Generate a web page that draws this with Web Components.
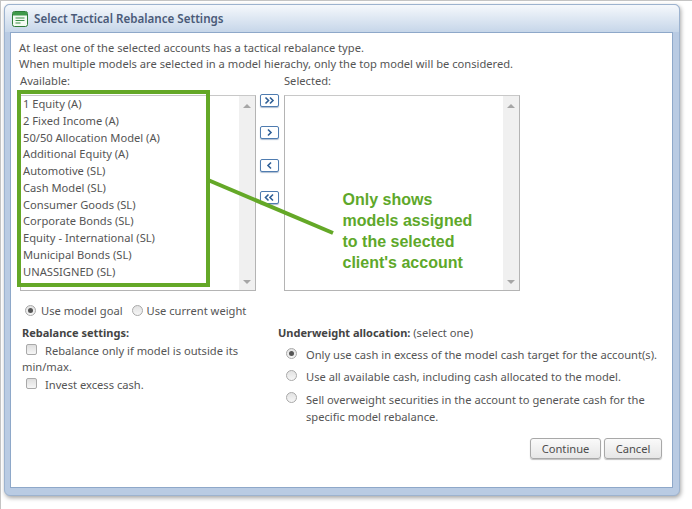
<!DOCTYPE html>
<html>
<head>
<meta charset="utf-8">
<style>
  html, body { margin: 0; padding: 0; background: #fff; }
  body { font-family: "Noto Sans", "Open Sans", sans-serif; font-size: 11.17px; color: #555; width: 692px; height: 509px; overflow: hidden; }
</style>
</head>
<body>
<rebalance-page>
  <rebalance-dialog heading="Select Tactical Rebalance Settings">
    <intro-text>
      At least one of the selected accounts has a tactical rebalance type.<br>
      When multiple models are selected in a model hierachy, only the top model will be considered.
    </intro-text>
    <model-picker>
      <span slot="available">1 Equity (A)</span>
      <span slot="available">2 Fixed Income (A)</span>
      <span slot="available">50/50 Allocation Model (A)</span>
      <span slot="available">Additional Equity (A)</span>
      <span slot="available">Automotive (SL)</span>
      <span slot="available">Cash Model (SL)</span>
      <span slot="available">Consumer Goods (SL)</span>
      <span slot="available">Corporate Bonds (SL)</span>
      <span slot="available">Equity - International (SL)</span>
      <span slot="available">Municipal Bonds (SL)</span>
      <span slot="available">UNASSIGNED (SL)</span>
    </model-picker>
    <goal-row></goal-row>
    <settings-columns></settings-columns>
    <dialog-actions></dialog-actions>
  </rebalance-dialog>
  <model-callout></model-callout>
</rebalance-page>

<script>
class RebalancePage extends HTMLElement {
  constructor() {
    super();
    this.attachShadow({ mode: 'open' }).innerHTML = `
      <style>
        :host { display: block; position: relative; width: 692px; height: 509px; box-sizing: border-box; border-top: 1px solid #c4c4c4; border-left: 1px solid #c4c4c4; padding: 3px 12px 0 3px; }
      </style>
      <slot></slot>`;
  }
}

class RebalanceDialog extends HTMLElement {
  constructor() {
    super();
    this.attachShadow({ mode: 'open' }).innerHTML = `
      <style>
        :host { display: block; height: 492px; box-sizing: border-box; border: 1px solid #9db3cf; border-radius: 5px 5px 6px 6px; background: #b9cbe3; box-shadow: 1px 2px 4px rgba(0,0,0,.35); padding: 0 6px 7px 5px; }
        .title { height: 27px; margin: 0 -6px 0 -5px; padding: 0 7px; display: flex; align-items: center; gap: 6px; background: linear-gradient(#f5f8fc, #c6d6e9); border-radius: 5px 5px 0 0; font-size: 11.6px; font-weight: 600; color: #4a5a78; }
        .body { height: 456px; box-sizing: border-box; background: #fff; border: 1px solid #8ea8c9; padding: 7px 0 0 8px; position: relative; }
        svg { display: block; flex: none; }
      </style>
      <div class="title">
        <svg width="16" height="16" viewBox="0 0 16 16">
          <rect x=".5" y=".5" width="15" height="15" rx="2" fill="#f4fbf2" stroke="#2f7d3a"/>
          <rect x="1" y="1" width="14" height="3.5" fill="#3f9a4a"/>
          <path d="M3.5 7h9M3.5 9.5h9M3.5 12h5" stroke="#3c8f4a" stroke-width="1.2"/>
        </svg>
        <span id="heading"></span>
      </div>
      <div class="body"><slot></slot></div>`;
  }
  connectedCallback() {
    this.shadowRoot.getElementById('heading').textContent = this.getAttribute('heading');
  }
}

class IntroText extends HTMLElement {
  constructor() {
    super();
    this.attachShadow({ mode: 'open' }).innerHTML = `
      <style>:host { display: block; line-height: 16px; }</style><slot></slot>`;
  }
}

class ListBox extends HTMLElement {
  constructor() {
    super();
    this.attachShadow({ mode: 'open' }).innerHTML = `
      <style>
        :host { display: flex; width: 236px; height: 196px; box-sizing: border-box; border: 1px solid #b4b4b4; border-top-color: #c8c8c8; background: #fff; }
        .items { flex: 1; padding: 0 0 0 2px; display: flex; flex-direction: column; }
        ::slotted(span) { display: block; height: 16.75px; line-height: 16.75px; white-space: nowrap; }
        .bar { width: 16px; background: #f0f0f0; display: flex; flex-direction: column; justify-content: space-between; align-items: center; padding: 8px 0 6px; box-sizing: border-box; }
        .up { border: 4px solid transparent; border-top: none; border-bottom: 4px solid #a6a6a6; width: 0; }
        .down { border: 4px solid transparent; border-bottom: none; border-top: 4px solid #a6a6a6; width: 0; }
      </style>
      <div class="items"><slot></slot></div>
      <div class="bar"><div class="up"></div><div class="down"></div></div>`;
  }
}

class MoveButton extends HTMLElement {
  constructor() {
    super();
    this.attachShadow({ mode: 'open' }).innerHTML = `
      <style>
        :host { display: block; width: 19px; height: 13px; box-sizing: border-box; border: 1px solid #4f7cb0; border-radius: 2px; background: #fff; box-shadow: 0 1px 1px rgba(90,120,160,.5); }
        svg { display: block; margin: 1px auto 0; }
      </style>
      <svg width="13" height="9" viewBox="0 0 13 9" fill="none" stroke="#2f5f96" stroke-width="1.6"></svg>`;
  }
  connectedCallback() {
    const paths = {
      '>>': 'M2.5 1.5 5.5 4.5 2.5 7.5M7 1.5 10 4.5 7 7.5',
      '>': 'M5 1.5 8 4.5 5 7.5',
      '<': 'M8 1.5 5 4.5 8 7.5',
      '<<': 'M5.5 1.5 2.5 4.5 5.5 7.5M10 1.5 7 4.5 10 7.5'
    };
    const p = document.createElementNS('http://www.w3.org/2000/svg', 'path');
    p.setAttribute('d', paths[this.getAttribute('dir')]);
    this.shadowRoot.querySelector('svg').appendChild(p);
  }
}

class ModelPicker extends HTMLElement {
  constructor() {
    super();
    this.attachShadow({ mode: 'open' }).innerHTML = `
      <style>
        :host { display: grid; grid-template-columns: 236px 28px 236px; grid-template-rows: 22px 196px; margin: 1px 0 0 1px; }
        .lbl { line-height: 16px; }
        .moves { grid-row: 2; grid-column: 2; display: flex; flex-direction: column; gap: 19.4px; padding: 0 0 0 4px; margin-top: -1px; }
      </style>
      <div class="lbl">Available:</div><div></div><div class="lbl">Selected:</div>
      <list-box><slot name="available"></slot></list-box>
      <div class="moves">
        <move-button dir=">>"></move-button>
        <move-button dir=">"></move-button>
        <move-button dir="<"></move-button>
        <move-button dir="<<"></move-button>
      </div>
      <list-box></list-box>`;
  }
}

class RadioDot extends HTMLElement {
  constructor() {
    super();
    this.attachShadow({ mode: 'open' }).innerHTML = `
      <style>
        :host { display: block; flex: none; width: 11px; height: 11px; box-sizing: border-box; border: 1px solid #a9a9a9; border-radius: 50%; background: linear-gradient(#e2e2e2, #f6f6f6); position: relative; }
        :host([checked])::after { content: ""; position: absolute; left: 2px; top: 2px; width: 5px; height: 5px; border-radius: 50%; background: #555; }
      </style>`;
  }
}

class CheckBox extends HTMLElement {
  constructor() {
    super();
    this.attachShadow({ mode: 'open' }).innerHTML = `
      <style>
        :host { display: block; flex: none; width: 11px; height: 11px; box-sizing: border-box; border: 1px solid #a9a9a9; border-radius: 2px; background: linear-gradient(#dedede, #f6f6f6); }
      </style>`;
  }
}

class GoalRow extends HTMLElement {
  constructor() {
    super();
    this.attachShadow({ mode: 'open' }).innerHTML = `
      <style>
        :host { display: flex; align-items: center; margin: 11px 0 0 6px; height: 16px; }
        span { margin: 0 9px 0 5px; }
      </style>
      <radio-dot checked></radio-dot><span>Use model goal</span>
      <radio-dot></radio-dot><span style="margin-left:4px">Use current weight</span>`;
  }
}

class SettingsColumns extends HTMLElement {
  constructor() {
    super();
    this.attachShadow({ mode: 'open' }).innerHTML = `
      <style>
        :host { display: grid; grid-template-columns: 256px 390px; margin: 7px 0 0 3px; line-height: 16px; }
        b { color: #444; font-weight: 700; font-size: 11px; }
        .row { display: flex; gap: 8px; }
        .left .row { padding-left: 4px; }
        .left check-box { margin-top: 1px; }
        .right .row { padding-left: 8px; margin-top: 6px; gap: 9px; }
        .right radio-dot { margin-top: 1px; }
      </style>
      <div class="left">
        <b>Rebalance settings:</b>
        <div class="row" style="margin-top:2px"><check-box></check-box><span>Rebalance only if model is outside its</span></div>
        <div>min/max.</div>
        <div class="row" style="margin-top:2px"><check-box></check-box><span>Invest excess cash.</span></div>
      </div>
      <div class="right">
        <div><b>Underweight allocation:</b> (select one)</div>
        <div class="row"><radio-dot checked></radio-dot><span>Only use cash in excess of the model cash target for the account(s).</span></div>
        <div class="row"><radio-dot></radio-dot><span>Use all available cash, including cash allocated to the model.</span></div>
        <div class="row"><radio-dot></radio-dot><span style="line-height:17px">Sell overweight securities in the account to generate cash for the<br>specific model rebalance.</span></div>
      </div>`;
  }
}

class PushButton extends HTMLElement {
  constructor() {
    super();
    this.attachShadow({ mode: 'open' }).innerHTML = `
      <style>
        :host { display: flex; align-items: center; justify-content: center; height: 21px; box-sizing: border-box; border: 1px solid #a8a8a8; border-radius: 3px; background: linear-gradient(#fafafa, #e6e6e6); box-shadow: 0 1px 1px rgba(0,0,0,.25); color: #4d4d4d; }
      </style><slot></slot>`;
  }
}

class DialogActions extends HTMLElement {
  constructor() {
    super();
    this.attachShadow({ mode: 'open' }).innerHTML = `
      <style>
        :host { display: flex; justify-content: flex-end; gap: 3px; margin: 13px 10px 0 0; }
        .c { width: 71px; } .x { width: 58px; }
      </style>
      <push-button class="c">Continue</push-button>
      <push-button class="x">Cancel</push-button>`;
  }
}

// annotation drawn over the screenshot: box, leader line and caption
class ModelCallout extends HTMLElement {
  constructor() {
    super();
    this.attachShadow({ mode: 'open' }).innerHTML = `
      <style>
        :host { display: block; position: absolute; left: 0; top: 0; width: 692px; height: 509px; pointer-events: none; }
        svg { position: absolute; left: 0; top: 0; }
        .note { position: absolute; left: 341.5px; top: 187.5px; font: bold 16px/21px "Liberation Sans", sans-serif; color: #5ea82a; white-space: nowrap; }
      </style>
      <svg width="692" height="509" viewBox="0 0 692 509" fill="none" stroke="#64a827" stroke-width="4">
        <rect x="18" y="91" width="189" height="193"/>
        <path d="M207 179 332 232"/>
      </svg>
      <div class="note">Only shows<br>models assigned<br>to the selected<br>client's account</div>`;
  }
}

customElements.define('rebalance-page', RebalancePage);
customElements.define('rebalance-dialog', RebalanceDialog);
customElements.define('intro-text', IntroText);
customElements.define('list-box', ListBox);
customElements.define('move-button', MoveButton);
customElements.define('model-picker', ModelPicker);
customElements.define('radio-dot', RadioDot);
customElements.define('check-box', CheckBox);
customElements.define('goal-row', GoalRow);
customElements.define('settings-columns', SettingsColumns);
customElements.define('push-button', PushButton);
customElements.define('dialog-actions', DialogActions);
customElements.define('model-callout', ModelCallout);
</script>
</body>
</html>
